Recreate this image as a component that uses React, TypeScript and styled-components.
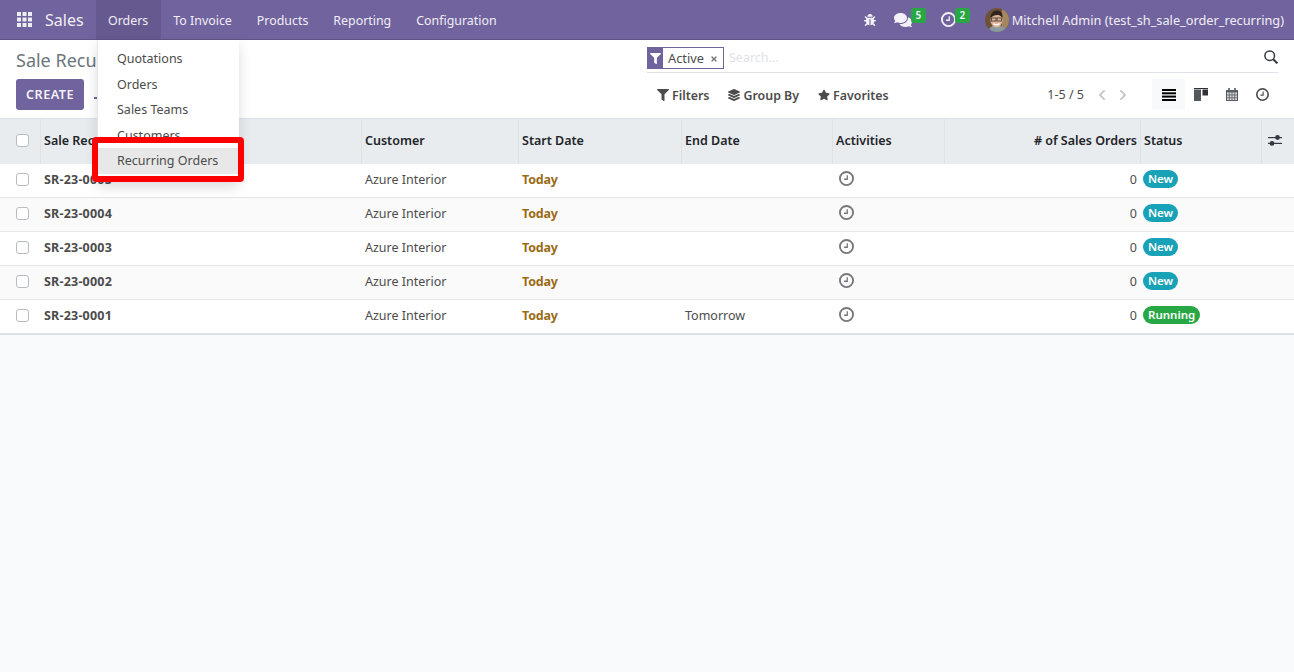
import React from "react";
import styled, { createGlobalStyle } from "styled-components";
import {
  FaBug,
  FaComments,
  FaFilter,
  FaLayerGroup,
  FaStar,
  FaChevronLeft,
  FaChevronRight,
  FaTimes,
} from "react-icons/fa";

const GlobalStyle = createGlobalStyle`
  html, body {
    margin: 0;
    height: 100%;
    background: #f9fafb;
    color: #4c4c4c;
    font-family: "Noto Sans", "Liberation Sans", sans-serif;
    font-size: 12.5px;
    overflow: hidden;
  }
`;

const Page = styled.div`
  position: relative;
  width: 1294px;
  height: 672px;
  overflow: hidden;
`;

const Navbar = styled.header`
  display: flex;
  align-items: center;
  height: 39px;
  border-bottom: 1px solid #5f5387;
  background: #71639e;
  color: #fff;
`;

const AppsButton = styled.span`
  display: flex;
  margin-left: 17px;
`;

const Brand = styled.span`
  margin-left: 13px;
  margin-right: 12px;
  font-size: 16px;
  color: #f0eef5;
`;

const NavItem = styled.span<{ $open?: boolean }>`
  display: flex;
  align-items: center;
  height: 38px;
  padding: 1px 12.5px 0;
  font-size: 12.4px;
  color: #f0eef5;
  background: ${(p) => (p.$open ? "#665990" : "transparent")};
`;

const Systray = styled.div`
  display: flex;
  align-items: center;
  margin-left: auto;
  padding-right: 10px;
`;

const TrayIcon = styled.span<{ $width: number }>`
  position: relative;
  display: flex;
  align-items: center;
  width: ${(p) => p.$width}px;
  height: 14px;
  color: #f4f2f8;
`;

const TrayBadge = styled.span<{ $left: number }>`
  position: absolute;
  top: -5px;
  left: ${(p) => p.$left}px;
  width: 15px;
  height: 15px;
  border-radius: 3px;
  background: #28a745;
  font-size: 10px;
  font-weight: 600;
  line-height: 14px;
  text-align: center;
`;

const UserName = styled.span`
  margin-left: 3px;
  font-size: 12.75px;
  color: #f0eef5;
`;

const ControlPanel = styled.section`
  display: grid;
  grid-template-columns: 631px 1fr;
  height: 79px;
  padding: 0 16px;
  box-sizing: border-box;
  border-bottom: 1px solid #dee2e6;
  background: #fff;
`;

const PanelLeft = styled.div`
  display: flex;
  flex-direction: column;
`;

const Title = styled.h1`
  margin: 8px 0 0;
  font-size: 18px;
  font-weight: 400;
  line-height: 24px;
  color: #6c757d;
`;

const ButtonRow = styled.div`
  display: flex;
  align-items: center;
  margin-top: 7px;
`;

const CreateButton = styled.span`
  display: flex;
  align-items: center;
  justify-content: center;
  width: 68px;
  height: 31px;
  border-radius: 3px;
  background: #71639e;
  color: #f4f2f8;
  font-size: 12.6px;
  font-weight: 600;
  letter-spacing: 0.5px;
`;

const ImportIcon = styled.span`
  display: flex;
  margin-left: 10px;
`;

const PanelRight = styled.div`
  display: flex;
  flex-direction: column;
`;

const SearchBar = styled.div`
  display: flex;
  align-items: flex-start;
  height: 25px;
  margin-top: 7px;
  border-bottom: 1px solid #dee2e6;
`;

const Facet = styled.span`
  display: flex;
  align-items: center;
  height: 20px;
  border: 1px solid #71639e;
  border-left: 0;
  color: #4c4c4c;
  font-size: 12.8px;
`;

const FacetIcon = styled.span`
  display: flex;
  align-items: center;
  justify-content: center;
  width: 16px;
  height: 22px;
  background: #71639e;
  color: #fff;
  font-size: 11px;
`;

const FacetLabel = styled.span`
  margin-left: 5px;
`;

const FacetClose = styled.span`
  display: flex;
  margin: 1px 5px 0 6px;
  font-size: 8px;
  color: #777;
`;

const SearchPlaceholder = styled.span`
  margin-left: 5px;
  line-height: 21px;
  color: #dfe2e6;
`;

const SearchIcon = styled.span`
  display: flex;
  margin: 3px 0 0 auto;
`;

const ToolRow = styled.div`
  display: flex;
  align-items: center;
  height: 31px;
  margin-top: 6px;
`;

const ToolButton = styled.span`
  display: flex;
  align-items: center;
  gap: 3px;
  margin-left: 10px;
  margin-right: 9px;
  padding-top: 1px;
  font-weight: 600;
  font-size: 12.4px;
  color: #4c4c4c;

  svg {
    font-size: 12px;
  }
`;

const Pager = styled.span`
  margin-left: auto;
  margin-right: 12px;
`;

const PagerArrow = styled.span`
  display: flex;
  margin-right: 9px;
  font-size: 12px;
  color: #c4c8cd;
`;

const ViewSwitch = styled.div`
  display: flex;
  margin-left: 14px;
`;

const ViewButton = styled.span<{ $active?: boolean }>`
  display: flex;
  align-items: center;
  justify-content: center;
  width: ${(p) => (p.$active ? 33 : 31)}px;
  height: 31px;
  background: ${(p) => (p.$active ? "#f8f9fa" : "transparent")};
`;

const columns = "40px 321px 157px 163px 151px 112px 196px 121px 33px";

const Table = styled.div`
  border-bottom: 2px solid #dee2e6;
`;

const HeaderRow = styled.div`
  display: grid;
  grid-template-columns: ${columns};
  height: 45px;
  background: #e9ecef;
  color: #212529;
  font-weight: 600;
  font-size: 12.5px;
`;

const HeaderCell = styled.div<{ $right?: boolean }>`
  display: flex;
  align-items: center;
  justify-content: ${(p) => (p.$right ? "flex-end" : "flex-start")};
  padding: 0 3px 2px;
  border-left: 1px solid #dee2e6;
`;

const BodyRow = styled.div`
  display: grid;
  grid-template-columns: ${columns};
  height: 34px;
  box-sizing: border-box;
  padding-bottom: 2px;
  border-bottom: 1px solid #e4e6e9;
  background: #fff;

  &:nth-child(odd) {
    background: #fafafa;
  }

  &:last-child {
    height: 33px;
    border-bottom: 0;
  }
`;

const Cell = styled.div<{ $right?: boolean; $bold?: boolean; $today?: boolean }>`
  display: flex;
  align-items: center;
  justify-content: ${(p) => (p.$right ? "flex-end" : "flex-start")};
  padding: 0 3px 0 4px;
  font-weight: ${(p) => (p.$bold || p.$today ? 700 : 400)};
  letter-spacing: ${(p) => (p.$bold ? 0.2 : p.$today ? -0.2 : 0)}px;
  color: ${(p) => (p.$today ? "#9a6b15" : "#4c4c4c")};
`;

const CheckCell = styled.div<{ $header?: boolean }>`
  display: flex;
  align-items: center;
  padding-left: 16px;
  padding-bottom: ${(p) => (p.$header ? 2 : 0)}px;
`;

const CheckBox = styled.span`
  width: 11px;
  height: 11px;
  border: 1px solid #b8bcc1;
  border-radius: 3px;
  background: #fff;
`;

const ActivityIcon = styled.span`
  display: flex;
  margin: 0 0 2px 3px;
`;

const StatusBadge = styled.span<{ $running?: boolean }>`
  display: inline-block;
  margin: 0 0 2px -1px;
  padding: 0 5px;
  height: 18px;
  border-radius: 9px;
  background: ${(p) => (p.$running ? "#28a745" : "#17a2b8")};
  color: #fff;
  font-size: 11.5px;
  font-weight: 600;
  line-height: 17px;
`;

const OptionalToggle = styled.span`
  display: flex;
  margin-left: 3px;
`;

const Dropdown = styled.nav`
  position: absolute;
  top: 40px;
  left: 97px;
  width: 142px;
  padding: 6px 0 7px;
  background: #fff;
  box-shadow: 0 6px 12px rgba(0, 0, 0, 0.14);
  border-left: 1px solid #e4e6e9;
  box-sizing: border-box;
`;

const MenuItem = styled.div<{ $selected?: boolean }>`
  height: 25.5px;
  padding-left: 19px;
  line-height: 26px;
  color: #4c4c4c;
  background: ${(p) => (p.$selected ? "#e8e8e8" : "transparent")};
`;

const Highlight = styled.div`
  position: absolute;
  top: 137px;
  left: 92px;
  width: 152px;
  height: 45px;
  box-sizing: border-box;
  border: 6px solid #fe0000;
  border-radius: 4px;
`;

const AppsIcon = () => (
  <svg width="15" height="15" viewBox="0 0 15 15" fill="#f0eef5">
    {[0, 5.5, 11].map((y) =>
      [0, 5.5, 11].map((x) => <rect key={`${x}-${y}`} x={x} y={y} width="4" height="4" />)
    )}
  </svg>
);

const ClockIcon = ({ size = 15, color = "#74787c", stroke = 2 }: { size?: number; color?: string; stroke?: number }) => (
  <svg width={size} height={size} viewBox="0 0 16 16" fill="none">
    <circle cx="8" cy="8" r={8 - stroke / 2} stroke={color} strokeWidth={stroke} />
    <path d="M8.8 4.4v4.4H5.4" stroke={color} strokeWidth="1.4" />
  </svg>
);

const MagnifierIcon = () => (
  <svg width="14" height="14" viewBox="0 0 14 14" fill="none" stroke="#343a40">
    <circle cx="5.7" cy="5.7" r="4.8" strokeWidth="1.5" />
    <path d="M9.2 9.2l4.2 4.2" strokeWidth="2" />
  </svg>
);

const DownloadMark = () => (
  <svg width="13" height="9" viewBox="0 0 13 9" fill="#71639e">
    <rect y="7" width="13" height="2" />
    <path d="M5 0h3v3h2L6.500 6.500 3 3h2z" />
  </svg>
);

const ListIcon = () => (
  <svg width="14" height="12" viewBox="0 0 14 12" fill="#000">
    <rect y="0" width="14" height="2" />
    <rect y="3.300" width="14" height="2" />
    <rect y="6.600" width="14" height="2" />
    <rect y="10" width="14" height="2" />
  </svg>
);

const KanbanIcon = () => (
  <svg width="14" height="13" viewBox="0 0 14 13" fill="#54585c">
    <rect width="14" height="1" fill="#2f3336" />
    <rect y="1.500" width="7" height="11.500" />
    <rect x="8.500" y="1.500" width="5.500" height="6" fill="#2f3336" />
  </svg>
);

const CalendarIcon = () => (
  <svg width="12" height="13" viewBox="0 0 12 13" fill="none" stroke="#5a5e62">
    <rect x="0.500" y="2.500" width="11" height="10" fill="#d5d7da" />
    <rect x="0" y="2" width="12" height="2.500" fill="#5a5e62" stroke="none" />
    <path d="M0.500 7h11M0.500 9.800h11M3.300 4.500v8M6 4.500v8M8.700 4.500v8" strokeWidth="0.8" />
    <path d="M3 0v3M9 0v3" strokeWidth="1.600" />
  </svg>
);

const SlidersIcon = () => (
  <svg width="14" height="11" viewBox="0 0 14 11" fill="#343a40">
    <rect y="2" width="14" height="1.200" />
    <rect y="7.800" width="14" height="1.200" />
    <circle cx="9.500" cy="2.500" r="2.400" />
    <circle cx="4" cy="8.400" r="2.400" />
  </svg>
);

const Avatar = () => (
  <svg width="24" height="24" viewBox="0 0 24 24" style={{ borderRadius: "50%" }}>
    <rect width="24" height="24" fill="#6e5238" />
    <rect x="17" width="7" height="24" fill="#a5875f" />
    <path d="M3 24c1-5 4-6.500 9-6.500s8 1.500 9 6.500z" fill="#8b9aa0" />
    <ellipse cx="11.500" cy="12" rx="6" ry="7.500" fill="#dfb094" />
    <path d="M5.500 10c0-5 3-7.500 6.500-7.500S18 5 17.500 10c-2-2.500-3.500-3-5.500-3s-4.500 1-6.500 3z" fill="#2f241d" />
    <rect x="6.500" y="10" width="4.500" height="3" fill="none" stroke="#3a3a3a" strokeWidth="0.800" />
    <rect x="12" y="10" width="4.500" height="3" fill="none" stroke="#3a3a3a" strokeWidth="0.800" />
    <path d="M8.500 15.500c2 1.800 4.500 1.800 6 0" stroke="#fff" strokeWidth="1.300" fill="none" />
  </svg>
);

const navLinks = ["Orders", "To Invoice", "Products", "Reporting", "Configuration"];
const menuLinks = ["Quotations", "Orders", "Sales Teams", "Customers", "Recurring Orders"];
const headers = ["Customer", "Start Date", "End Date", "Activities"];

const orders = [
  { ref: "SR-23-0005", end: "", status: "New" },
  { ref: "SR-23-0004", end: "", status: "New" },
  { ref: "SR-23-0003", end: "", status: "New" },
  { ref: "SR-23-0002", end: "", status: "New" },
  { ref: "SR-23-0001", end: "Tomorrow", status: "Running" },
];

export default function App(): JSX.Element {
  return (
    <Page>
      <GlobalStyle />
      <Navbar>
        <AppsButton>
          <AppsIcon />
        </AppsButton>
        <Brand>Sales</Brand>
        {navLinks.map((link) => (
          <NavItem key={link} $open={link === "Orders"}>
            {link}
          </NavItem>
        ))}
        <Systray>
          <TrayIcon $width={30}>
            <FaBug size={12} />
          </TrayIcon>
          <TrayIcon $width={47}>
            <FaComments size={18} />
            <TrayBadge $left={17}>5</TrayBadge>
          </TrayIcon>
          <TrayIcon $width={44}>
            <ClockIcon size={15} color="#f4f2f8" />
            <TrayBadge $left={14}>2</TrayBadge>
          </TrayIcon>
          <Avatar />
          <UserName>Mitchell Admin (test_sh_sale_order_recurring)</UserName>
        </Systray>
      </Navbar>

      <ControlPanel>
        <PanelLeft>
          <Title>Sale Recurring</Title>
          <ButtonRow>
            <CreateButton>CREATE</CreateButton>
            <ImportIcon>
              <DownloadMark />
            </ImportIcon>
          </ButtonRow>
        </PanelLeft>
        <PanelRight>
          <SearchBar>
            <FacetIcon>
              <FaFilter />
            </FacetIcon>
            <Facet>
              <FacetLabel>Active</FacetLabel>
              <FacetClose>
                <FaTimes />
              </FacetClose>
            </Facet>
            <SearchPlaceholder>Search...</SearchPlaceholder>
            <SearchIcon>
              <MagnifierIcon />
            </SearchIcon>
          </SearchBar>
          <ToolRow>
            <ToolButton>
              <FaFilter />
              Filters
            </ToolButton>
            <ToolButton>
              <FaLayerGroup />
              Group By
            </ToolButton>
            <ToolButton>
              <FaStar />
              Favorites
            </ToolButton>
            <Pager>1-5 / 5</Pager>
            <PagerArrow>
              <FaChevronLeft />
            </PagerArrow>
            <PagerArrow>
              <FaChevronRight />
            </PagerArrow>
            <ViewSwitch>
              <ViewButton $active>
                <ListIcon />
              </ViewButton>
              <ViewButton>
                <KanbanIcon />
              </ViewButton>
              <ViewButton>
                <CalendarIcon />
              </ViewButton>
              <ViewButton>
                <ClockIcon size={13} color="#4c4c4c" />
              </ViewButton>
            </ViewSwitch>
          </ToolRow>
        </PanelRight>
      </ControlPanel>

      <Table>
        <HeaderRow>
          <CheckCell $header>
            <CheckBox />
          </CheckCell>
          <HeaderCell>Sale Recurring</HeaderCell>
          {headers.map((h) => (
            <HeaderCell key={h}>{h}</HeaderCell>
          ))}
          <HeaderCell $right># of Sales Orders</HeaderCell>
          <HeaderCell>Status</HeaderCell>
          <HeaderCell>
            <OptionalToggle>
              <SlidersIcon />
            </OptionalToggle>
          </HeaderCell>
        </HeaderRow>
        {orders.map((o) => (
          <BodyRow key={o.ref}>
            <CheckCell>
              <CheckBox />
            </CheckCell>
            <Cell $bold>{o.ref}</Cell>
            <Cell>Azure Interior</Cell>
            <Cell $today>Today</Cell>
            <Cell>{o.end}</Cell>
            <Cell>
              <ActivityIcon>
                <ClockIcon />
              </ActivityIcon>
            </Cell>
            <Cell $right>0</Cell>
            <Cell>
              <StatusBadge $running={o.status === "Running"}>{o.status}</StatusBadge>
            </Cell>
            <Cell />
          </BodyRow>
        ))}
      </Table>

      <Dropdown>
        {menuLinks.map((link) => (
          <MenuItem key={link} $selected={link === "Recurring Orders"}>
            {link}
          </MenuItem>
        ))}
      </Dropdown>
      <Highlight />
    </Page>
  );
}
